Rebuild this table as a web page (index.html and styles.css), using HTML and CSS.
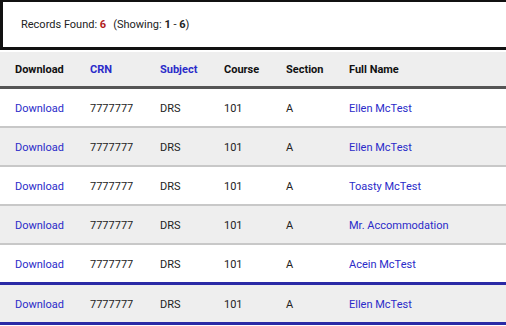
FILE: index.html
```html
<!DOCTYPE html>
<html>
<head>
<meta charset="utf-8">
<link rel="stylesheet" href="styles.css">
</head>
<body>
<div class="summary">
  <span>Records Found: <b class="count">6</b></span>
  <span class="showing">(Showing: <b>1</b> - <b>6</b>)</span>
</div>
<table class="results">
  <thead>
    <tr>
      <th>Download</th>
      <th class="sort">CRN</th>
      <th class="sort">Subject</th>
      <th>Course</th>
      <th>Section</th>
      <th>Full Name</th>
    </tr>
  </thead>
  <tbody>
    <tr><td><a>Download</a></td><td>7777777</td><td>DRS</td><td>101</td><td>A</td><td><a>Ellen McTest</a></td></tr>
    <tr class="alt"><td><a>Download</a></td><td>7777777</td><td>DRS</td><td>101</td><td>A</td><td><a>Ellen McTest</a></td></tr>
    <tr><td><a>Download</a></td><td>7777777</td><td>DRS</td><td>101</td><td>A</td><td><a>Toasty McTest</a></td></tr>
    <tr class="alt"><td><a>Download</a></td><td>7777777</td><td>DRS</td><td>101</td><td>A</td><td><a>Mr. Accommodation</a></td></tr>
    <tr><td><a>Download</a></td><td>7777777</td><td>DRS</td><td>101</td><td>A</td><td><a>Acein McTest</a></td></tr>
    <tr class="alt selected"><td><a>Download</a></td><td>7777777</td><td>DRS</td><td>101</td><td>A</td><td><a>Ellen McTest</a></td></tr>
  </tbody>
</table>
</body>
</html>
```
FILE: styles.css
```css
html, body {
  margin: 0;
  padding: 0;
  background: #fff;
  font-family: Roboto, "Liberation Sans", sans-serif;
  font-size: 11px;
  color: #222;
}
.summary {
  height: 45px;
  border-top: 2px solid #111;
  border-left: 3px solid #111;
  border-bottom: 3px solid #111;
  margin-right: -10px;
  padding-left: 18px;
  display: flex;
  align-items: center;
  gap: 7px;
  box-sizing: content-box;
}
.summary b {
  font-weight: 700;
  color: #222;
}
.summary b.count {
  color: #b01c1c;
}
.results {
  margin-top: 2px;
  width: 100%;
  border-collapse: collapse;
}
.results th, .results td {
  text-align: left;
  padding: 0 0 0 15px;
  white-space: nowrap;
}
.results th {
  height: 34px;
  background: #eeeeee;
  font-weight: 700;
  color: #111;
  border-bottom: 3px solid #555;
}
.results th.sort {
  color: #2b2bc9;
}
.results td {
  height: 36px;
  border-bottom: 2px solid #c8c8c8;
  padding-top: 1px;
}
.results th:nth-child(1), .results td:nth-child(1) { width: 60px; }
.results th:nth-child(2), .results td:nth-child(2) { width: 55px; }
.results th:nth-child(3), .results td:nth-child(3) { width: 49px; }
.results th:nth-child(4), .results td:nth-child(4) { width: 47px; }
.results th:nth-child(5), .results td:nth-child(5) { width: 48px; }
.results tr.alt td {
  background: #eeeeee;
}
.results tr.selected td {
  border-top: 3px solid #2a2aa6;
  border-bottom: 3px solid #2a2aa6;
}
.results a {
  color: #2b2bc9;
  text-decoration: none;
}
```
